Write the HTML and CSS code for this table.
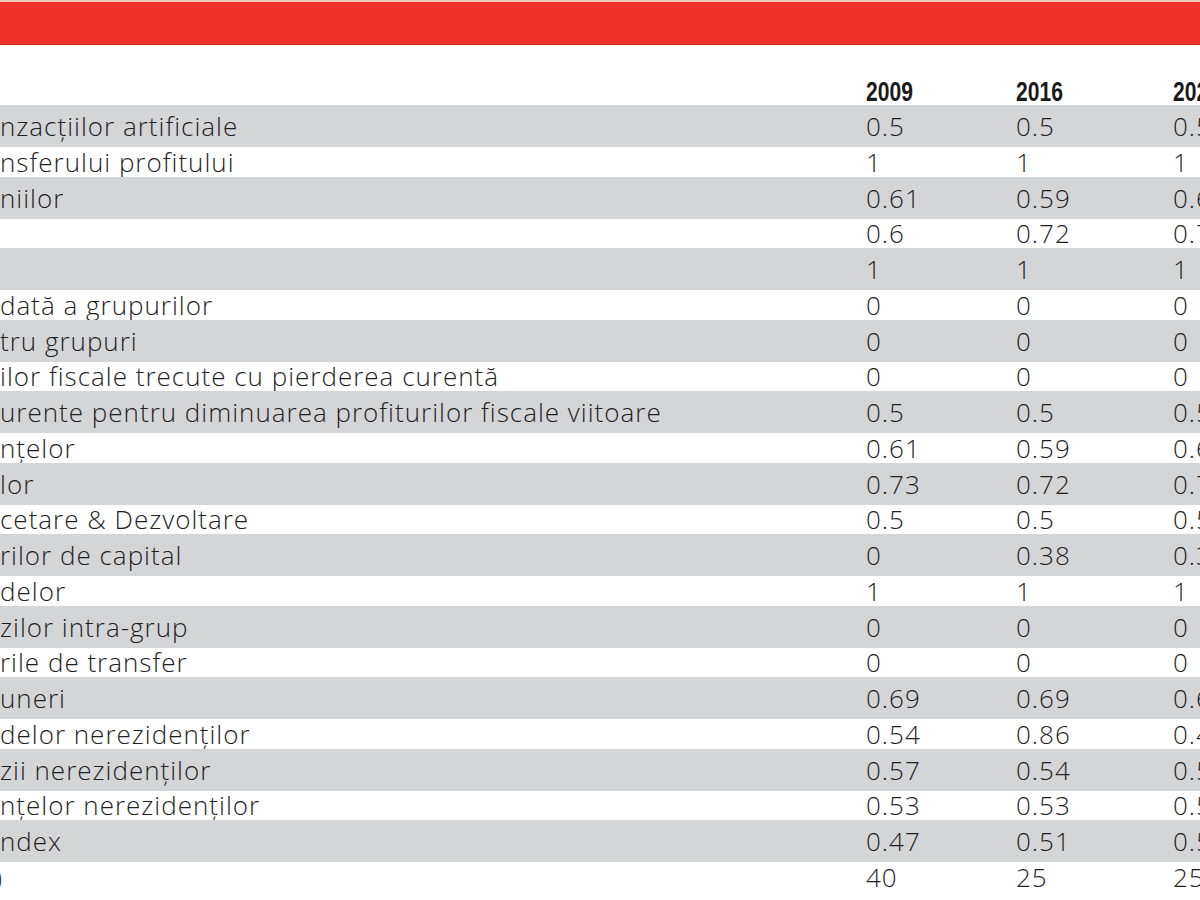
FILE: index.html
```html
<!DOCTYPE html>
<html lang="ro">
<head>
<meta charset="utf-8">
<title>Indicatori</title>
<link rel="stylesheet" href="styles.css">
</head>
<body>
<div class="page">
  <div class="topline"></div>
  <div class="banner"></div>
  <div class="table">
    <div class="row head"><span class="lbl"></span><span class="yr"><b>2009</b></span><span class="yr"><b>2016</b></span><span class="yr"><b>2020</b></span></div>
    <div class="row g"><span class="lbl">nzacțiilor artificiale</span><span>0.5</span><span>0.5</span><span>0.5</span></div>
    <div class="row w"><span class="lbl">nsferului profitului</span><span>1</span><span>1</span><span>1</span></div>
    <div class="row g"><span class="lbl">niilor</span><span>0.61</span><span>0.59</span><span>0.61</span></div>
    <div class="row w"><span class="lbl"></span><span>0.6</span><span>0.72</span><span>0.72</span></div>
    <div class="row g"><span class="lbl"></span><span>1</span><span>1</span><span>1</span></div>
    <div class="row w"><span class="lbl">dată a grupurilor</span><span>0</span><span>0</span><span>0</span></div>
    <div class="row g"><span class="lbl">tru grupuri</span><span>0</span><span>0</span><span>0</span></div>
    <div class="row w"><span class="lbl">ilor fiscale trecute cu pierderea curentă</span><span>0</span><span>0</span><span>0</span></div>
    <div class="row g"><span class="lbl">urente pentru diminuarea profiturilor fiscale viitoare</span><span>0.5</span><span>0.5</span><span>0.5</span></div>
    <div class="row w"><span class="lbl">nțelor</span><span>0.61</span><span>0.59</span><span>0.61</span></div>
    <div class="row g"><span class="lbl">lor</span><span>0.73</span><span>0.72</span><span>0.72</span></div>
    <div class="row w"><span class="lbl">cetare &amp; Dezvoltare</span><span>0.5</span><span>0.5</span><span>0.5</span></div>
    <div class="row g"><span class="lbl">rilor de capital</span><span>0</span><span>0.38</span><span>0.38</span></div>
    <div class="row w"><span class="lbl">delor</span><span>1</span><span>1</span><span>1</span></div>
    <div class="row g"><span class="lbl">zilor intra-grup</span><span>0</span><span>0</span><span>0</span></div>
    <div class="row w"><span class="lbl">rile de transfer</span><span>0</span><span>0</span><span>0</span></div>
    <div class="row g"><span class="lbl">uneri</span><span>0.69</span><span>0.69</span><span>0.69</span></div>
    <div class="row w"><span class="lbl">delor nerezidenților</span><span>0.54</span><span>0.86</span><span>0.44</span></div>
    <div class="row g"><span class="lbl">zii nerezidenților</span><span>0.57</span><span>0.54</span><span>0.54</span></div>
    <div class="row w"><span class="lbl">nțelor nerezidenților</span><span>0.53</span><span>0.53</span><span>0.53</span></div>
    <div class="row g"><span class="lbl">ndex</span><span>0.47</span><span>0.51</span><span>0.51</span></div>
    <div class="row w"><span class="lbl cut">)</span><span>40</span><span>25</span><span>25</span></div>
  </div>
</div>
</body>
</html>
```

FILE: styles.css
```css
html, body {
  margin: 0;
  padding: 0;
  background: #ffffff;
}
body {
  width: 1200px;
  height: 900px;
  overflow: hidden;
  font-family: "Open Sans", Roboto, "Liberation Sans", sans-serif;
  color: #1f1f1f;
}
.page {
  width: 1200px;
  overflow: hidden;
}
.topline {
  height: 2px;
  background: #efc7b4;
}
.banner {
  height: 42px;
  background: #ee3129;
  border-bottom: 1px solid #d92d26;
}
.table {
  display: flex;
  flex-direction: column;
}
.row {
  display: grid;
  grid-template-columns: 866px 150px 157px 120px;
  align-items: center;
  font-size: 26px;
  font-weight: 300;
  line-height: 1;
  letter-spacing: 1px;
  white-space: nowrap;
}
.row.head {
  height: 60px;
  align-items: end;
}
.yr {
  font-family: "Liberation Sans", Arial, sans-serif;
  font-size: 27px;
  line-height: 1;
  color: #1a1a1a;
  margin-bottom: -1px;
  letter-spacing: 0;
}
.yr b {
  display: inline-block;
  font-weight: 700;
  transform: scaleX(0.78);
  transform-origin: left center;
}
.row.g {
  height: 42px;
  background: #d4d5d7;
}
.row.w {
  height: 29.5px;
  background: #ffffff;
}
.lbl {
  padding-left: 0;
}
.cut {
  margin-left: -5px;
}
```
